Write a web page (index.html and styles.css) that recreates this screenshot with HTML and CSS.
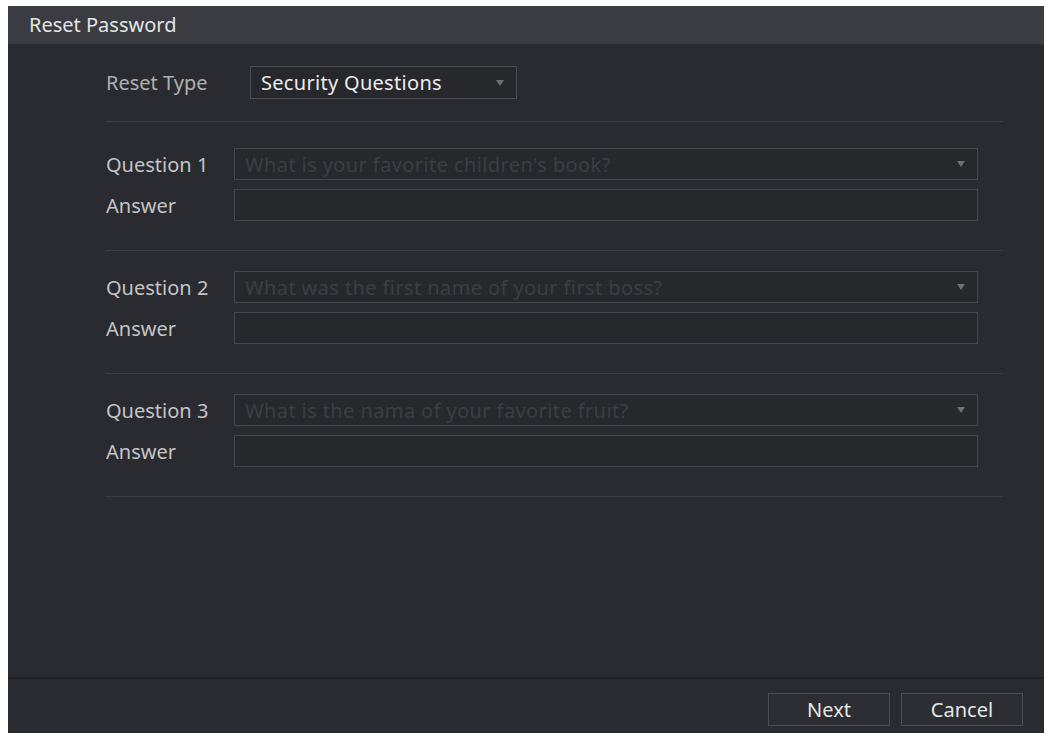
FILE: index.html
```html
<!DOCTYPE html>
<html lang="en">
<head>
  <meta charset="UTF-8">
  <meta name="viewport" content="width=device-width, initial-scale=1.0">
  <title>Reset Password</title>
  <link rel="stylesheet" href="styles.css">
</head>
<body>
  <div class="dialog">
    <div class="dialog-title">Reset Password</div>

    <div class="dialog-body">
      <div class="type-row">
        <span class="label type-label">Reset Type</span>
        <div class="select type-select">
          <span class="select-value">Security Questions</span>
          <span class="arrow"></span>
        </div>
      </div>

      <div class="section first">
        <div class="row">
          <span class="label">Question 1</span>
          <div class="select field">
            <span class="select-value muted">What is your favorite children's book?</span>
            <span class="arrow"></span>
          </div>
        </div>
        <div class="row">
          <span class="label">Answer</span>
          <input class="field" type="text">
        </div>
      </div>

      <div class="section">
        <div class="row">
          <span class="label">Question 2</span>
          <div class="select field">
            <span class="select-value muted">What was the first name of your first boss?</span>
            <span class="arrow"></span>
          </div>
        </div>
        <div class="row">
          <span class="label">Answer</span>
          <input class="field" type="text">
        </div>
      </div>

      <div class="section">
        <div class="row">
          <span class="label">Question 3</span>
          <div class="select field">
            <span class="select-value muted">What is the nama of your favorite fruit?</span>
            <span class="arrow"></span>
          </div>
        </div>
        <div class="row">
          <span class="label">Answer</span>
          <input class="field" type="text">
        </div>
      </div>
    </div>

    <div class="dialog-footer">
      <button class="btn">Next</button>
      <button class="btn">Cancel</button>
    </div>
  </div>
</body>
</html>
```

FILE: styles.css
```css
* {
  margin: 0;
  padding: 0;
  box-sizing: border-box;
  font-family: "Noto Sans", "Open Sans", sans-serif;
}

body {
  background: #ffffff;
  padding: 6px 0 0 8px;
}

.dialog {
  width: 1036px;
  height: 727px;
  background: #292b30;
  display: flex;
  flex-direction: column;
}

.dialog-title {
  height: 39px;
  background: #3a3c41;
  color: #e4e4e4;
  font-size: 20px;
  line-height: 38px;
  padding-left: 21px;
  border-bottom: 1px solid #303237;
}

.dialog-body {
  flex: 1;
  padding: 21px 41px 0 98px;
}

.label {
  color: #c4c4c4;
  font-size: 20px;
}

.type-row {
  display: flex;
  align-items: center;
  height: 33px;
  margin-bottom: 22px;
}

.type-label {
  width: 144px;
  color: #b0b0b0;
}

.select {
  display: flex;
  align-items: center;
  justify-content: space-between;
  border: 1px solid #4a4c51;
  background: #26282c;
  padding: 0 10px 0 10px;
}

.type-select {
  width: 267px;
  height: 33px;
}

.select-value {
  color: #ececec;
  font-size: 20px;
  letter-spacing: 0.3px;
  white-space: nowrap;
}

.select-value.muted {
  color: #3b3e44;
  font-size: 20px;
  letter-spacing: 0.4px;
  padding-left: 0;
}

.arrow {
  width: 0;
  height: 0;
  border-left: 4px solid transparent;
  border-right: 4px solid transparent;
  border-top: 6px solid #6e7075;
  margin-right: 2px;
}

.section {
  border-top: 1px solid #3a3c41;
  padding: 20px 0 29px;
  display: flex;
  flex-direction: column;
  gap: 9px;
}

.section.first {
  padding-top: 26px;
}

.section:last-child {
  border-bottom: 1px solid #3a3c41;
}

.row {
  display: flex;
  align-items: center;
  height: 32px;
}

.row .label {
  width: 128px;
}

.field {
  width: 744px;
  height: 32px;
  border: 1px solid #45474c;
  background: #26282c;
  outline: none;
}

.dialog-footer {
  height: 56px;
  border-top: 2px solid #1f2125;
  display: flex;
  justify-content: flex-end;
  gap: 11px;
  padding: 14px 21px 0 0;
}

.btn {
  width: 122px;
  height: 33px;
  background: #2c2e33;
  border: 1px solid #4c4e53;
  color: #e6e6e6;
  font-size: 20px;
}
```
